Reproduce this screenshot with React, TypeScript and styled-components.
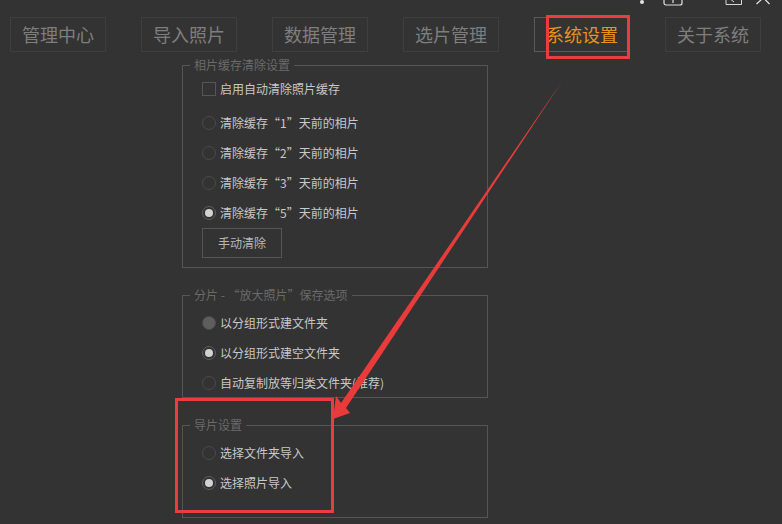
import React, { FC } from 'react';
import styled, { createGlobalStyle } from 'styled-components';

const GlobalStyle = createGlobalStyle`
  html, body {
    margin: 0;
    padding: 0;
    background: #333333;
  }
  body {
    font-family: "Noto Sans CJK SC", "Noto Sans", sans-serif;
  }
`;

const StyledPage = styled.div`
  position: relative;
  width: 782px;
  height: 524px;
  overflow: hidden;
  background: #333333;
  display: flex;
  flex-direction: column;
  gap: 6px;
  padding: 17px 0 0 10px;
  box-sizing: border-box;
`;

const StyledTabBar = styled.nav`
  display: flex;
  gap: 35px;
`;

const StyledTab = styled.div<{ $active?: boolean }>`
  width: 96px;
  height: 35px;
  box-sizing: border-box;
  display: flex;
  align-items: center;
  justify-content: center;
  padding-bottom: 2px;
  font-size: 18px;
  line-height: 1;
  border: 1px solid ${({ $active }) => ($active ? '#5a5a5a' : '#3e3e3e')};
  color: ${({ $active }) => ($active ? '#e8921f' : '#7e7e7e')};
`;

const StyledPanel = styled.div`
  display: flex;
  flex-direction: column;
  gap: 20px;
  width: 306px;
  margin-left: 172px;
`;

const StyledGroup = styled.fieldset<{ $height: number; $top: number }>`
  margin: 0;
  min-width: 0;
  height: ${({ $height }) => $height}px;
  box-sizing: border-box;
  border: 1px solid #555555;
  padding: ${({ $top }) => $top}px 0 0 19px;
  display: flex;
  flex-direction: column;
`;

const StyledLegend = styled.legend`
  margin-left: -12px;
  padding: 0 4px;
  font-size: 12px;
  line-height: 14px;
  height: 14px;
  color: #6a6a6a;
`;

const StyledRow = styled.div<{ $spaced?: boolean }>`
  display: flex;
  align-items: center;
  gap: 4px;
  height: 30px;
  flex: none;
  margin-bottom: ${({ $spaced }) => ($spaced ? '4px' : '0')};
  font-size: 12px;
  line-height: 1;
  color: #c8c8c8;
  white-space: nowrap;
`;

const StyledCheckbox = styled.span`
  width: 14px;
  height: 14px;
  box-sizing: border-box;
  border: 1px solid #555555;
  flex: none;
`;

const StyledRadio = styled.span<{ $state?: 'on' | 'filled' }>`
  width: 14px;
  height: 14px;
  box-sizing: border-box;
  border-radius: 50%;
  flex: none;
  display: flex;
  align-items: center;
  justify-content: center;
  border: 1px solid ${({ $state }) => ($state === 'on' ? '#5c5c5c' : '#4a4a4a')};
  background: ${({ $state }) => ($state === 'filled' ? '#5e5e5e' : 'transparent')};

  &::after {
    content: '';
    display: ${({ $state }) => ($state === 'on' ? 'block' : 'none')};
    width: 8px;
    height: 8px;
    border-radius: 50%;
    background: #d2d2d2;
  }
`;

const StyledButton = styled.button`
  width: 80px;
  height: 30px;
  flex: none;
  padding: 0;
  box-sizing: border-box;
  background: transparent;
  border: 1px solid #555555;
  color: #b8b8b8;
  font-family: inherit;
  font-size: 12px;
  line-height: 1;
`;

const StyledOverlay = styled.svg`
  position: absolute;
  inset: 0;
  pointer-events: none;
`;

const tabs = ['管理中心', '导入照片', '数据管理', '选片管理', '系统设置', '关于系统'];

type RadioItem = { label: string; state?: 'on' | 'filled' };

const cacheOptions: RadioItem[] = [
  { label: '清除缓存“1”天前的相片' },
  { label: '清除缓存“2”天前的相片' },
  { label: '清除缓存“3”天前的相片' },
  { label: '清除缓存“5”天前的相片', state: 'on' },
];

const enlargeOptions: RadioItem[] = [
  { label: '以分组形式建文件夹', state: 'filled' },
  { label: '以分组形式建空文件夹', state: 'on' },
  { label: '自动复制放等归类文件夹(推荐)' },
];

const importOptions: RadioItem[] = [
  { label: '选择文件夹导入' },
  { label: '选择照片导入', state: 'on' },
];

const RadioRows: FC<{ items: RadioItem[] }> = ({ items }) => (
  <>
    {items.map((item) => (
      <StyledRow key={item.label}>
        <StyledRadio $state={item.state} />
        {item.label}
      </StyledRow>
    ))}
  </>
);

const App: FC = () => {
  return (
    <StyledPage>
      <GlobalStyle />
      <StyledTabBar>
        {tabs.map((tab) => (
          <StyledTab key={tab} $active={tab === '系统设置'}>
            {tab}
          </StyledTab>
        ))}
      </StyledTabBar>
      <StyledPanel>
        <StyledGroup $height={210} $top={2}>
          <StyledLegend>相片缓存清除设置</StyledLegend>
          <StyledRow $spaced>
            <StyledCheckbox />
            启用自动清除照片缓存
          </StyledRow>
          <RadioRows items={cacheOptions} />
          <StyledButton>手动清除</StyledButton>
        </StyledGroup>
        <StyledGroup $height={110} $top={6}>
          <StyledLegend>分片 - “放大照片”保存选项</StyledLegend>
          <RadioRows items={enlargeOptions} />
        </StyledGroup>
        <StyledGroup $height={100} $top={6}>
          <StyledLegend>导片设置</StyledLegend>
          <RadioRows items={importOptions} />
        </StyledGroup>
      </StyledPanel>
      <StyledOverlay width="782" height="524" viewBox="0 0 782 524">
        {/* window controls cut off by the top edge */}
        <circle cx="642" cy="2" r="2" fill="#e6e6e6" />
        <path d="M664 -6v9a2 2 0 0 0 2 2h14a2 2 0 0 0 2-2v-9" fill="none" stroke="#e0e0e0" strokeWidth="1.2" />
        <path d="M673 -2v5" stroke="#e0e0e0" strokeWidth="1.2" />
        <path d="M726 -6v10.5h15.5v-10.5" fill="none" stroke="#d8d8d8" strokeWidth="1" />
        <path d="M729 -2l5 4" stroke="#d8d8d8" strokeWidth="1" />
        <path d="M756.5 4l5.5 -5M769.5 4l-5 -5" fill="none" stroke="#e6e6e6" strokeWidth="1.2" />
        {/* red annotations */}
        <rect x="547.5" y="16.5" width="81" height="41" fill="none" stroke="#e93d3f" strokeWidth="3" />
        <rect x="176.5" y="399.5" width="156" height="112" fill="none" stroke="#e93d3f" strokeWidth="3" />
        <polygon
          points="563,80 346,408 350,413 333,419 336,396 341,403"
          fill="#ea3b3b"
        />
      </StyledOverlay>
    </StyledPage>
  );
};

export default App;
